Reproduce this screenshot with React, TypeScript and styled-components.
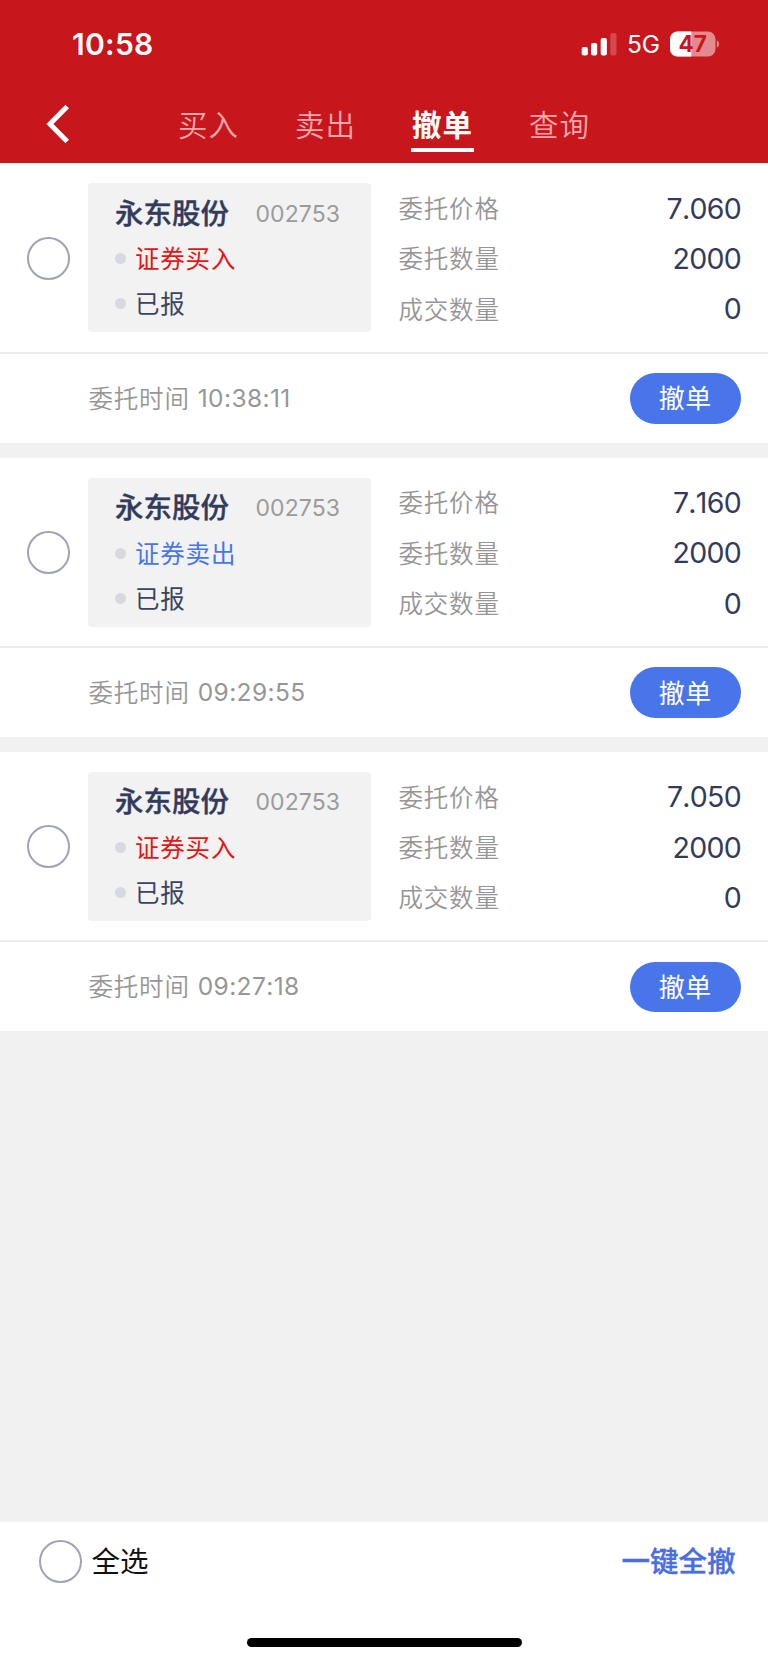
import React from "react";
import styled, { createGlobalStyle } from "styled-components";

const GlobalStyle = createGlobalStyle`
  * { box-sizing: border-box; }
  body { margin: 0; background: #f1f1f1; }
  button { border: 0; padding: 0; margin: 0; background: none; font: inherit; color: inherit; white-space: nowrap; }
`;

const Screen = styled.div`
  display: flex;
  flex-direction: column;
  width: 768px;
  height: 1662px;
  overflow: hidden;
  background: #f1f1f1;
  font-family: Inter, "Noto Sans CJK SC", sans-serif;
  color: #333b5c;
`;

const Header = styled.header`
  flex: none;
  height: 163.4px;
  background: #c7161c;
  color: #fff;
`;

const StatusBar = styled.div`
  display: flex;
  align-items: center;
  justify-content: space-between;
  height: 87px;
  padding: 0 48.5px 0 72px;
`;

const Clock = styled.div`
  font-size: 30px;
  font-weight: 600;
  line-height: 36px;
  letter-spacing: 0.3px;
`;

const StatusIcons = styled.div`
  display: flex;
  align-items: center;
`;

const Network = styled.span`
  width: 33px;
  margin: 1px 9.5px 0 10px;
  font-size: 24.5px;
  line-height: 28px;
  letter-spacing: -0.2px;
`;

const NavBar = styled.nav`
  display: flex;
  height: 76px;
  padding: 0 0 0 46px;
`;

const Back = styled.button`
  width: 131px;
  height: 76px;
  display: flex;
  padding-top: 17px;
`;

const Tab = styled.button<{ $active?: boolean }>`
  display: flex;
  flex-direction: column;
  align-items: center;
  width: 63px;
  height: 66px;
  margin-right: 54px;
  padding-top: 18px;
  font-size: 29.5px;
  line-height: 40px;
  letter-spacing: 1px;
  font-weight: ${(p) => (p.$active ? 700 : 350)};
  color: ${(p) => (p.$active ? "#fff" : "#f5a9ac")};
  &::after {
    content: "";
    width: 63px;
    height: 4px;
    margin-top: 3px;
    background: ${(p) => (p.$active ? "#fff" : "transparent")};
  }
`;

const Orders = styled.main`
  flex: 1;
  display: flex;
  flex-direction: column;
  gap: 14.6px;
`;

const OrderCard = styled.article`
  height: 279.6px;
  background: #fff;
`;

const OrderBody = styled.div`
  display: flex;
  height: 190.6px;
  padding: 20px 27px 0 27px;
  border-bottom: 2px solid #ebebeb;
`;

const Radio = styled.span`
  flex: none;
  width: 43px;
  height: 43px;
  border: 2px solid #a1a3b5;
  border-radius: 50%;
  background: #fff;
`;

const RadioCell = styled.div`
  display: flex;
  align-items: center;
  width: 61px;
  height: 150px;
`;

const StockBox = styled.section`
  width: 283px;
  height: 149px;
  padding: 10px 0 0 27px;
  border-radius: 4px;
  background: #f2f2f2;
`;

const StockTitle = styled.div`
  display: flex;
  align-items: center;
  height: 43px;
  padding-bottom: 2px;
`;

const StockName = styled.strong`
  width: 140.5px;
  font-size: 28.5px;
  font-weight: 500;
  -webkit-text-stroke: 0.35px currentColor;
  line-height: 40px;
`;

const StockCode = styled.span`
  font-size: 23px;
  line-height: 30px;
  letter-spacing: 0.1px;
  color: #9b9b9b;
`;

const StockLine = styled.div<{ $color?: string }>`
  display: flex;
  align-items: center;
  gap: 9px;
  height: 45px;
  font-size: 24.5px;
  letter-spacing: 0.8px;
  line-height: 44px;
  color: ${(p) => p.$color || "#3b4363"};
  &::before {
    content: "";
    width: 11px;
    height: 11px;
    border-radius: 50%;
    background: #d8d9df;
  }
`;

const LineText = styled.span`
  padding-top: 1px;
`;

const Details = styled.dl`
  flex: 1;
  margin: 0;
  padding: 0 0 0 27.5px;
`;

const Detail = styled.div`
  display: flex;
  align-items: center;
  justify-content: space-between;
  height: 50.2px;
`;

const Label = styled.dt`
  padding-top: 1.6px;
  font-size: 24.5px;
  font-weight: 350;
  letter-spacing: 0.8px;
  line-height: 50px;
  color: #969696;
`;

const Value = styled.dd`
  margin: 0;
  padding-top: 1px;
  font-size: 28.5px;
  letter-spacing: -0.7px;
  font-kerning: none;
  line-height: 50px;
  color: #333b5c;
`;

const OrderFooter = styled.div`
  display: flex;
  align-items: center;
  justify-content: space-between;
  height: 89px;
  padding: 0 27px 0 88.5px;
`;

const Time = styled.div`
  display: flex;
  gap: 8px;
  font-size: 24.5px;
  line-height: 40px;
  color: #969696;
`;

const TimeLabel = styled.span`
  padding-top: 1px;
  font-weight: 350;
  letter-spacing: 0.8px;
`;

const TimeValue = styled.time`
  font-weight: 400;
  letter-spacing: 0.4px;
  font-kerning: none;
`;

const CancelButton = styled.button`
  width: 111.5px;
  height: 50.5px;
  padding-top: 1px;
  border-radius: 26px;
  background: #4876ea;
  color: #fff;
  font-size: 26px;
  line-height: 49px;
  letter-spacing: 0.6px;
`;

const BottomBar = styled.footer`
  flex: none;
  display: flex;
  flex-direction: column;
  justify-content: space-between;
  align-items: center;
  height: 140px;
  padding-bottom: 15px;
  background: #fff;
`;

const BottomActions = styled.div`
  display: flex;
  align-items: center;
  justify-content: space-between;
  width: 100%;
  height: 78px;
  padding: 0 32.5px 0 38.5px;
`;

const SelectAll = styled.label`
  display: flex;
  align-items: center;
  gap: 10px;
  font-size: 28.5px;
  line-height: 40px;
  color: #111;
`;

const BottomText = styled.span`
  padding-top: 2px;
`;

const CancelAll = styled.button`
  padding-top: 2px;
  font-size: 28.5px;
  font-weight: 500;
  -webkit-text-stroke: 0.35px currentColor;
  line-height: 40px;
  color: #4a6de0;
`;

const HomeIndicator = styled.div`
  width: 275px;
  height: 9.5px;
  border-radius: 5px;
  background: #000;
`;

const BUY = "#e51515";
const SELL = "#4876ea";

const orders = [
  { side: "证券买入", color: BUY, price: "7.060", time: "10:38:11" },
  { side: "证券卖出", color: SELL, price: "7.160", time: "09:29:55" },
  { side: "证券买入", color: BUY, price: "7.050", time: "09:27:18" },
];

const tabs = ["买入", "卖出", "撤单", "查询"];

const SignalIcon = () => (
  <svg width="36" height="24" viewBox="0 0 36 24" fill="#fff">
    <rect x="0.7" y="15" width="6.2" height="8.5" rx="2" />
    <rect x="10" y="11" width="6.2" height="12.5" rx="2" />
    <rect x="19.7" y="6" width="6.2" height="17.5" rx="2" />
    <rect x="29.3" y="1" width="6.2" height="22.5" rx="2" opacity="0.22" />
  </svg>
);

const BatteryIcon = () => (
  <svg width="50" height="26" viewBox="0 0 50 26">
    <defs>
      <clipPath id="battery">
        <rect x="0" y="0.5" width="45.5" height="25" rx="7.5" />
      </clipPath>
    </defs>
    <g clipPath="url(#battery)">
      <rect width="46" height="26" fill="#e38a8e" />
      <rect width="21.3" height="26" fill="#fff" />
    </g>
    <path d="M46.8 9.2a4.2 4.2 0 0 1 0 7.6z" fill="#e38a8e" />
    <text x="22.6" y="20.8" textAnchor="middle" fontFamily="Inter" fontWeight="700" fontSize="22.5" fill="#c7161c">
      47
    </text>
  </svg>
);

export default function App() {
  return (
    <Screen>
      <GlobalStyle />
      <Header>
        <StatusBar>
          <Clock>10:58</Clock>
          <StatusIcons>
            <SignalIcon />
            <Network>5G</Network>
            <BatteryIcon />
          </StatusIcons>
        </StatusBar>
        <NavBar>
          <Back aria-label="返回">
            <svg width="24" height="40" viewBox="0 0 24 40" fill="none">
              <path d="M21.2 2.6 3.9 20l17.3 17.4" stroke="#fff" strokeWidth="5" />
            </svg>
          </Back>
          {tabs.map((t) => (
            <Tab key={t} $active={t === "撤单"}>
              {t}
            </Tab>
          ))}
        </NavBar>
      </Header>
      <Orders>
        {orders.map((o) => (
          <OrderCard key={o.time}>
            <OrderBody>
              <RadioCell>
                <Radio />
              </RadioCell>
              <StockBox>
                <StockTitle>
                  <StockName>永东股份</StockName>
                  <StockCode>002753</StockCode>
                </StockTitle>
                <StockLine $color={o.color}>
                  <LineText>{o.side}</LineText>
                </StockLine>
                <StockLine>
                  <LineText>已报</LineText>
                </StockLine>
              </StockBox>
              <Details>
                <Detail>
                  <Label>委托价格</Label>
                  <Value>{o.price}</Value>
                </Detail>
                <Detail>
                  <Label>委托数量</Label>
                  <Value>2000</Value>
                </Detail>
                <Detail>
                  <Label>成交数量</Label>
                  <Value>0</Value>
                </Detail>
              </Details>
            </OrderBody>
            <OrderFooter>
              <Time>
                <TimeLabel>委托时间</TimeLabel>
                <TimeValue>{o.time}</TimeValue>
              </Time>
              <CancelButton>撤单</CancelButton>
            </OrderFooter>
          </OrderCard>
        ))}
      </Orders>
      <BottomBar>
        <BottomActions>
          <SelectAll>
            <Radio />
            <BottomText>全选</BottomText>
          </SelectAll>
          <CancelAll>一键全撤</CancelAll>
        </BottomActions>
        <HomeIndicator />
      </BottomBar>
    </Screen>
  );
}
